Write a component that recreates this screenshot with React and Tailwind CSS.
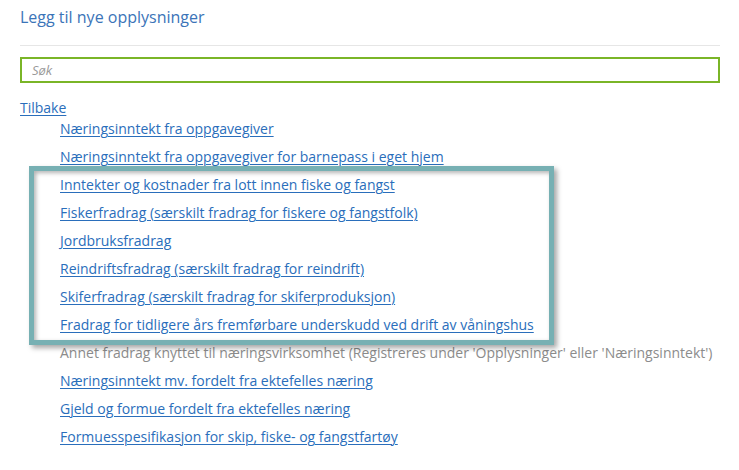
const before = [
  "Næringsinntekt fra oppgavegiver",
  "Næringsinntekt fra oppgavegiver for barnepass i eget hjem",
];

const marked = [
  "Inntekter og kostnader fra lott innen fiske og fangst",
  "Fiskerfradrag (særskilt fradrag for fiskere og fangstfolk)",
  "Jordbruksfradrag",
  "Reindriftsfradrag (særskilt fradrag for reindrift)",
  "Skiferfradrag (særskilt fradrag for skiferproduksjon)",
  "Fradrag for tidligere års fremførbare underskudd ved drift av våningshus",
];

const after = [
  "Næringsinntekt mv. fordelt fra ektefelles næring",
  "Gjeld og formue fordelt fra ektefelles næring",
  "Formuesspesifikasjon for skip, fiske- og fangstfartøy",
];

function Item({ label }) {
  return (
    <li className="h-[28px] flex items-center pl-10">
      <a href="#" className="text-[#2a6ebb] underline underline-offset-2 decoration-1">
        {label}
      </a>
    </li>
  );
}

export default function App() {
  return (
    <div className="w-[739px] h-[470px] bg-white px-5 pt-[6px] text-[14px] font-['Open_Sans',sans-serif] overflow-hidden">
      <h2 className="text-[16px] leading-[22px] text-[#3b74b8] font-normal">Legg til nye opplysninger</h2>
      <div className="mt-[17px] w-[700px] border-t border-[#e6e6e6]" />
      <input
        type="text"
        placeholder="Søk"
        className="mt-[11px] block w-[700px] h-[26px] border-2 border-[#7ab527] px-[10px] text-[13px] italic placeholder:text-[#999] outline-none"
      />
      <div className="mt-[13px] h-[22px] flex items-center">
        <a href="#" className="text-[#2a6ebb] underline underline-offset-2">Tilbake</a>
      </div>
      <ul className="-mt-[4px]">
        {before.map((l) => <Item key={l} label={l} />)}
        <li className="relative">
          <ul>
            {marked.map((l) => <Item key={l} label={l} />)}
          </ul>
          <div className="absolute left-[9px] top-[-4px] bottom-[-7px] w-[525px] border-[5px] border-[#77b0b3] shadow-[3px_3px_5px_rgba(0,0,0,0.35),inset_2px_2px_4px_rgba(0,0,0,0.3)] pointer-events-none" />
        </li>
        <li className="h-[28px] flex items-center pl-10 text-[#8c8c8c]">
          Annet fradrag knyttet til næringsvirksomhet (Registreres under 'Opplysninger' eller 'Næringsinntekt')
        </li>
        {after.map((l) => <Item key={l} label={l} />)}
      </ul>
    </div>
  );
}
